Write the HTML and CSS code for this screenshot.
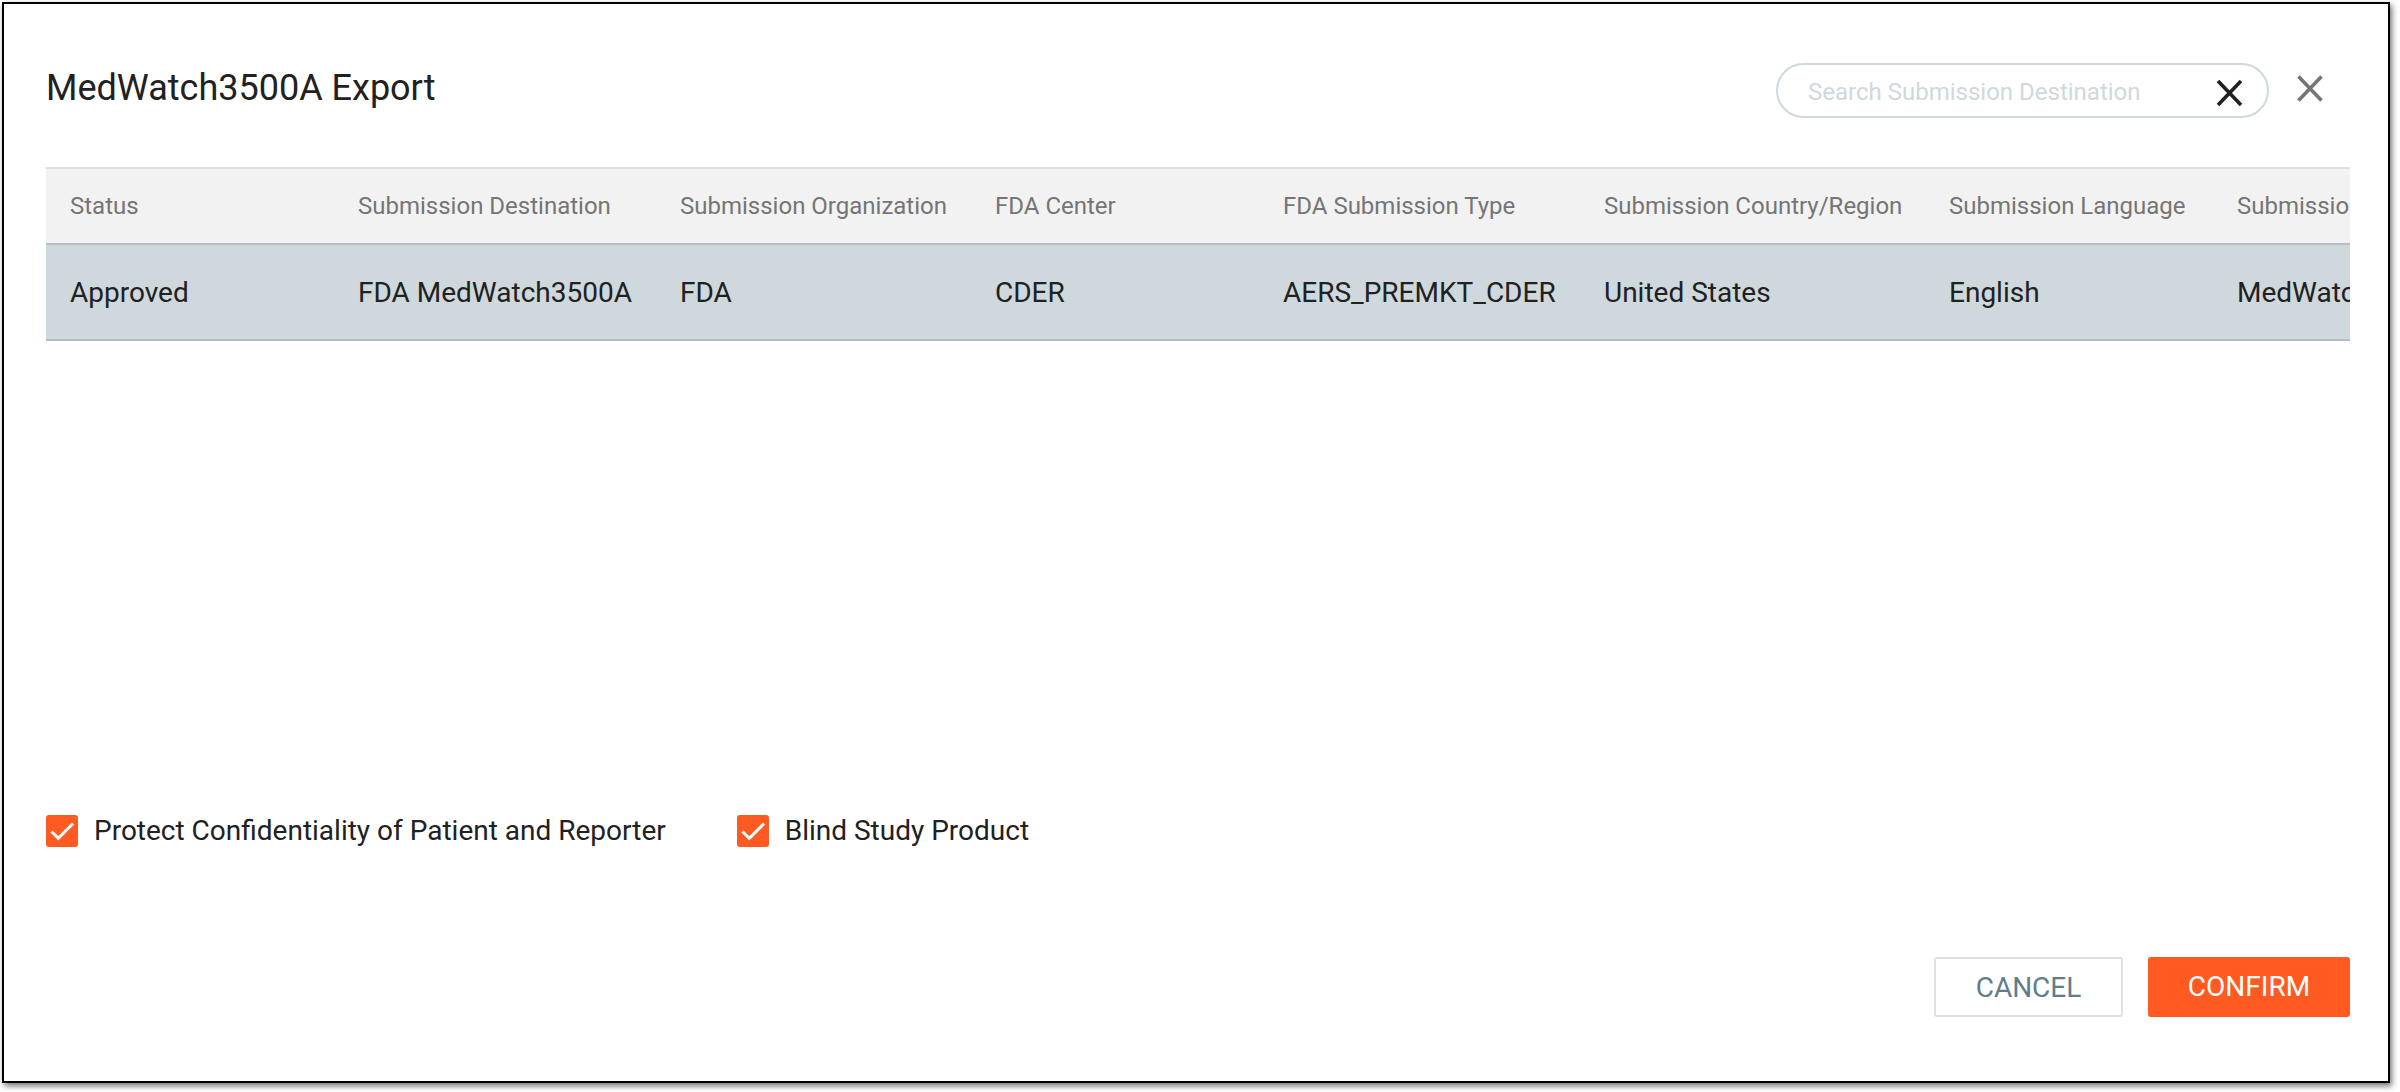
FILE: index.html
```html
<!DOCTYPE html>
<html lang="en">
<head>
<meta charset="utf-8">
<title>MedWatch3500A Export</title>
<link rel="stylesheet" href="styles.css">
</head>
<body>
<main class="dialog">
  <header class="head">
    <h1 class="title">MedWatch3500A Export</h1>
    <div class="search">
      <span class="placeholder">Search Submission Destination</span>
      <svg class="x-dark" viewBox="0 0 27 28"><path d="M2 2L25 26M25 2L2 26"/></svg>
    </div>
    <svg class="x-close" viewBox="0 0 26 27"><path d="M1.5 1.5L24.5 25.5M24.5 1.5L1.5 25.5"/></svg>
  </header>
  <section class="table">
    <div class="row row-head">
      <div class="c c1">Status</div><div class="c c2">Submission Destination</div><div class="c c3">Submission Organization</div><div class="c c4">FDA Center</div><div class="c c5">FDA Submission Type</div><div class="c c6">Submission Country/Region</div><div class="c c7">Submission Language</div><div class="c c8">Submission Template</div>
    </div>
    <div class="row row-body">
      <div class="c c1">Approved</div><div class="c c2">FDA MedWatch3500A</div><div class="c c3">FDA</div><div class="c c4">CDER</div><div class="c c5">AERS_PREMKT_CDER</div><div class="c c6">United States</div><div class="c c7">English</div><div class="c c8">MedWatch3500A</div>
    </div>
  </section>
  <div class="checks">
    <label class="check"><span class="box"><svg viewBox="0 0 32 32"><path d="M5.5 16.5L12.3 23.3L27 8.5"/></svg></span>Protect Confidentiality of Patient and Reporter</label>
    <label class="check"><span class="box"><svg viewBox="0 0 32 32"><path d="M5.5 16.5L12.3 23.3L27 8.5"/></svg></span>Blind Study Product</label>
  </div>
  <footer class="actions">
    <button class="btn cancel">CANCEL</button>
    <button class="btn confirm">CONFIRM</button>
  </footer>
</main>
</body>
</html>
```
FILE: styles.css
```css
* { box-sizing: border-box; }
html, body { margin: 0; height: 1092px; overflow: hidden; background: #fff; }
body { padding: 2px 10px 0 2px; font-family: Roboto, "Liberation Sans", sans-serif; }
.dialog {
  height: 1081px;
  background: #fff;
  border: 2px solid #000;
  box-shadow: 2px 3px 6px rgba(0,0,0,.55);
  padding: 0 38px 0 42px;
  display: flex;
  flex-direction: column;
}
.head { display: flex; align-items: flex-start; height: 163px; }
.title { margin: 60px auto 0 0; font-size: 36px; font-weight: 400; line-height: 48px; color: #212121; }
.search {
  margin-top: 59px;
  width: 493px; height: 55px;
  border: 2px solid #cfd8dc; border-radius: 28px;
  display: flex; align-items: center; justify-content: space-between;
  padding: 2px 24px 0 30px;
}
.placeholder { font-size: 24px; color: #cfd8dc; }
.x-dark { width: 27px; height: 28px; margin-top: 2px; fill: none; stroke: #212121; stroke-width: 3.6; }
.x-close { margin: 71px 27px 0 28px; width: 26px; height: 27px; fill: none; stroke: #757575; stroke-width: 3.6; }
.table { overflow: hidden; }
.row { display: flex; white-space: nowrap; }
.row-head { height: 78px; background: #f2f2f2; border-top: 2px solid #e0e0e0; border-bottom: 2px solid #b0bec5; font-size: 24px; color: #757575; }
.row-body { height: 96px; background: #cfd8dc; border-bottom: 2px solid #b0bec5; font-size: 28px; color: #212121; }
.c { flex: none; padding-left: 24px; display: flex; align-items: center; }
.c1 { width: 288px; } .c2 { width: 322px; } .c3 { width: 315px; } .c4 { width: 288px; }
.c5 { width: 321px; } .c6 { width: 345px; } .c7 { width: 288px; } .c8 { width: 300px; }
.checks { margin-top: 474px; display: flex; gap: 71px; }
.check { display: flex; align-items: center; gap: 16px; font-size: 28px; line-height: 32px; color: #212121; }
.box { width: 32px; height: 32px; border-radius: 3px; background: #ff5a22; display: flex; }
.box svg { width: 32px; height: 32px; fill: none; stroke: #fff; stroke-width: 3; }
.actions { margin-top: 110px; display: flex; justify-content: flex-end; gap: 25px; }
.btn { height: 60px; border-radius: 3px; font-family: inherit; font-size: 28px; padding: 0; }
.cancel { width: 189px; background: #fff; border: 2px solid #e0e0e0; color: #607d8b; }
.confirm { width: 202px; background: #ff5a22; border: 0; color: #fff; padding-bottom: 2px; }
```
